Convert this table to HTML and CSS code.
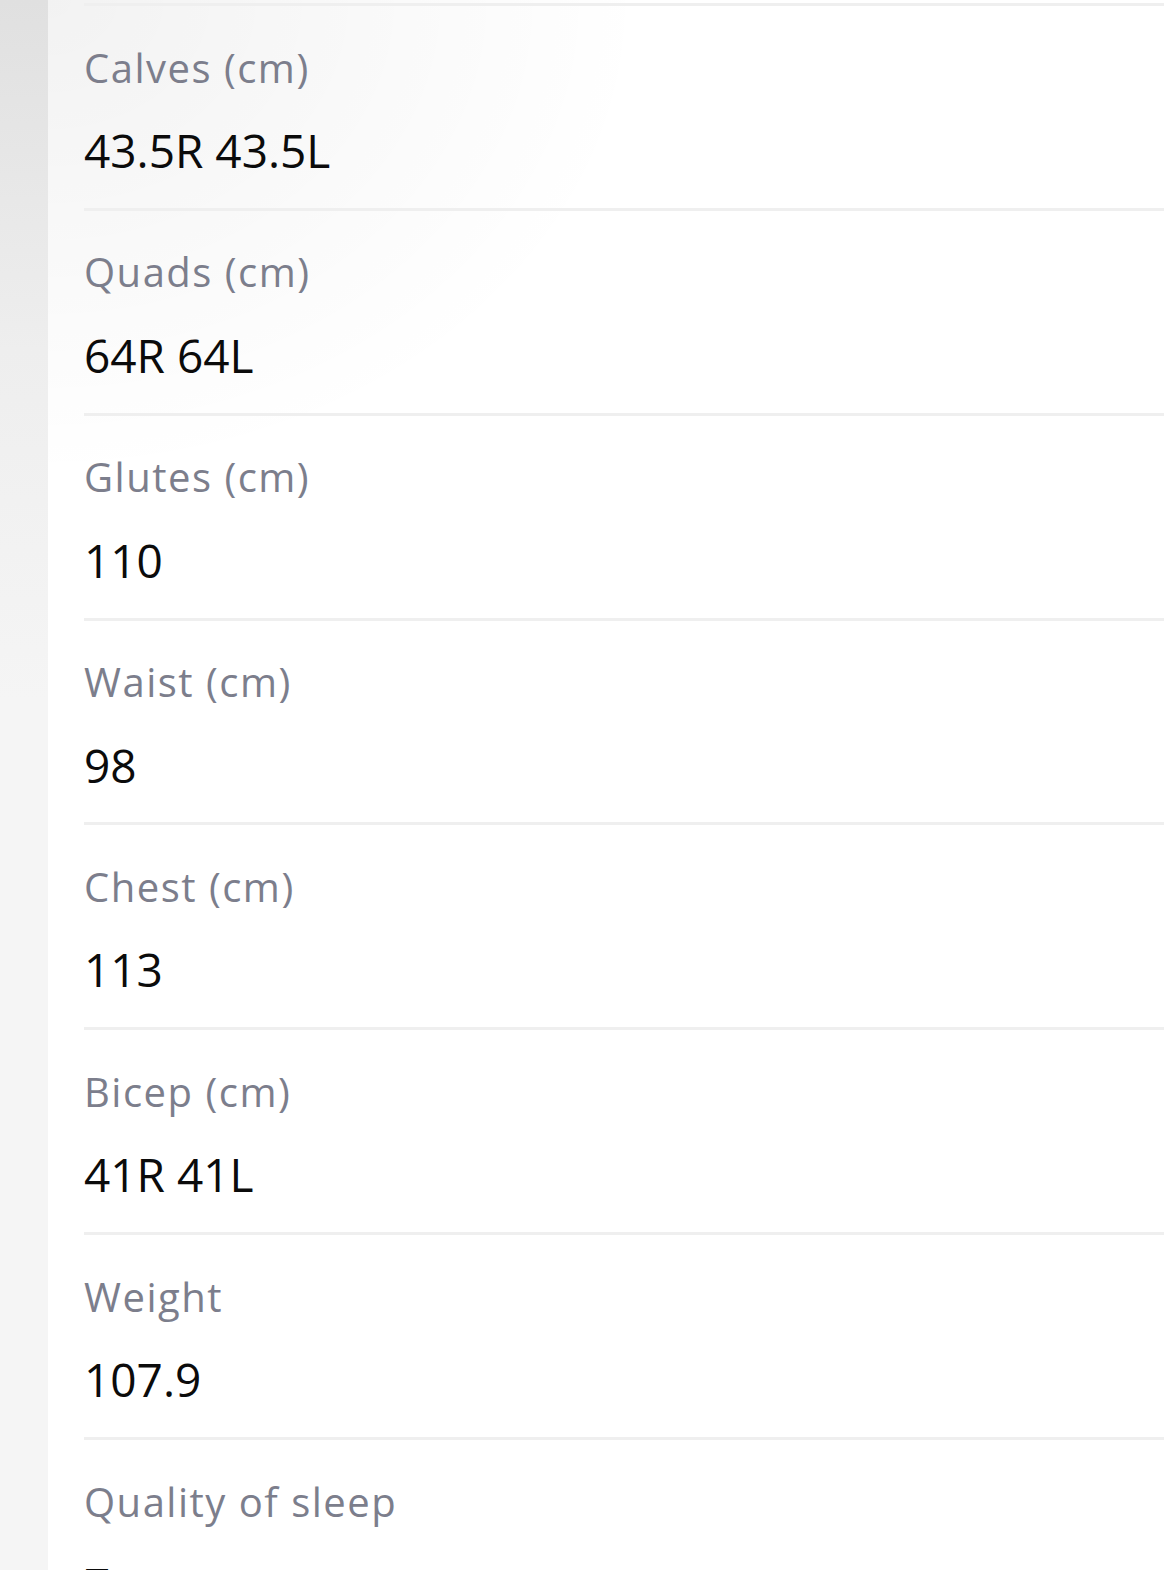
FILE: index.html
```html
<!DOCTYPE html>
<html lang="en">
<head>
    <meta charset="UTF-8">
    <meta name="viewport" content="width=device-width, initial-scale=1.0">
    <title>Measurements</title>
    <link rel="stylesheet" href="styles.css">
</head>
<body>
    <div class="sheet">
        <div class="panel">
            <div class="row">
                <span class="label">Calves (cm)</span>
                <span class="value">43.5R 43.5L</span>
            </div>
            <div class="row">
                <span class="label">Quads (cm)</span>
                <span class="value">64R 64L</span>
            </div>
            <div class="row">
                <span class="label">Glutes (cm)</span>
                <span class="value">110</span>
            </div>
            <div class="row">
                <span class="label">Waist (cm)</span>
                <span class="value">98</span>
            </div>
            <div class="row">
                <span class="label">Chest (cm)</span>
                <span class="value">113</span>
            </div>
            <div class="row">
                <span class="label">Bicep (cm)</span>
                <span class="value">41R 41L</span>
            </div>
            <div class="row">
                <span class="label">Weight</span>
                <span class="value">107.9</span>
            </div>
            <div class="row">
                <span class="label">Quality of sleep</span>
                <span class="value">7</span>
            </div>
        </div>
    </div>
</body>
</html>
```

FILE: styles.css
```css
html, body { margin: 0; padding: 0; }
body {
    font-family: "Open Sans", "Noto Sans", sans-serif;
    background: linear-gradient(180deg, #e0e0e0 0, #eeeeee 350px, #f5f5f5 700px, #f5f5f5 100%);
    height: 1570px;
    overflow: hidden;
}
.sheet { display: flex; height: 100%; }
.panel {
    flex: 1;
    margin-left: 48px;
    padding-left: 36px;
    padding-top: 3px;
    background:
        radial-gradient(ellipse 600px 480px at 0 0, rgba(0, 0, 0, 0.05), rgba(0, 0, 0, 0) 100%),
        #ffffff;
}
.row {
    display: flex;
    flex-direction: column;
    height: 204.86px;
    box-sizing: border-box;
    border-top: 3px solid #efefef;
}
.label {
    color: #7c7e8c;
    font-size: 40px;
    line-height: 52px;
    margin-top: 35.5px;
    letter-spacing: 1.5px;
}
.value {
    color: #0b0b0b;
    font-size: 46px;
    line-height: 60px;
    margin-top: 26.5px;
}
```
